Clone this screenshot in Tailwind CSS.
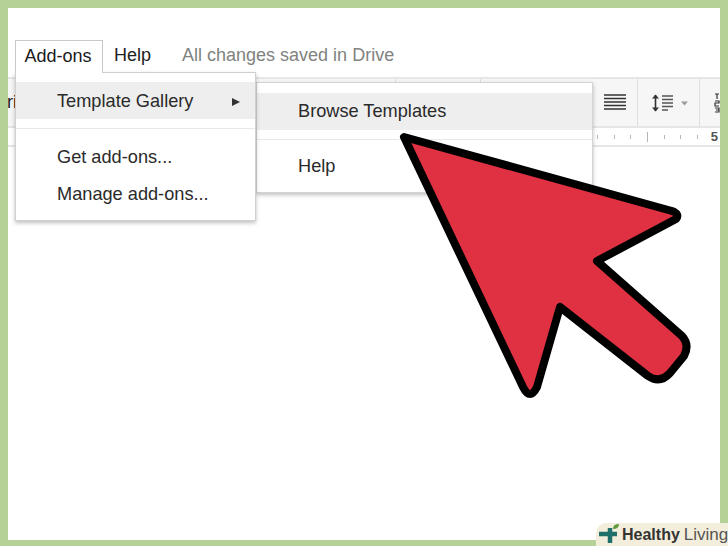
<!DOCTYPE html>
<html lang="en">
<head>
  <meta charset="UTF-8" />
  <title>Add-ons menu</title>
  <script src="https://cdn.jsdelivr.net/npm/@tailwindcss/browser@4"></script>
</head>
<body class="relative w-[728px] h-[546px] overflow-hidden bg-[#b6d197] p-2 font-['Liberation_Sans',Arial,sans-serif]">

  <div class="relative w-[712px] h-[532px] bg-white">
    <!-- menu bar -->
    <div class="flex items-start h-[69px] pt-[32px] text-[18px] text-[#333]">
      <div class="ml-[7px] w-[88px] h-[33px] pb-[2px] pr-[2px] flex items-center justify-center bg-white border border-b-0 border-[#c9c9c9] text-[#1a1a1a] relative z-10">Add-ons</div>
      <div class="ml-[11px] h-[33px] pb-[2px] flex items-center text-[#222]">Help</div>
      <div class="ml-[31px] h-[33px] pb-[2px] flex items-center text-[#80837f]">All changes saved in Drive</div>
    </div>

    <!-- toolbar -->
    <div class="flex h-[51px] bg-[#f6f6f6] border-y-2 border-[#e6e6e6] text-[#222]">
      <div class="w-[390px] border-r border-[#dedede] flex items-center text-[18px] overflow-hidden"><span class="-ml-px">ri</span></div>
      <div class="w-[85px] border-r border-[#dedede]"></div>
      <div class="w-[158px] border-r border-[#dedede] flex items-center justify-end pr-[11px]">
        <svg width="22" height="17" viewBox="0 0 22 17"><path d="M0 1h22M0 4.500h22M0 8h22M0 11.500h22M0 15h22" stroke="#333" stroke-width="1.500"/></svg>
      </div>
      <div class="w-[62px] border-r border-[#dedede] flex items-center pl-[12px]">
        <svg width="40" height="20" viewBox="0 0 40 20">
          <path d="M5.500 2v16" stroke="#333" stroke-width="1.600"/>
          <path d="M2 5.500L5.500 1.500L9 5.500zM2 14.500L5.500 18.500L9 14.500z" fill="#333"/>
          <path d="M12 3h11M12 6.500h11M12 10h11M12 13.500h11M12 17h6" stroke="#555" stroke-width="1.300"/>
          <path d="M31 8.500h7l-3.500 4z" fill="#9a9a9a"/>
        </svg>
      </div>
      <div class="flex-1 pl-[14px] flex flex-col justify-center text-[#333]">
        <svg width="6" height="20" viewBox="0 0 6 20"><path d="M1 1h4M3 1v5M1 8h4v2H1v3h4M1 15h4v4H1M2 17h3" fill="none" stroke="#333" stroke-width="1.200"/></svg>
      </div>
    </div>

    <!-- ruler -->
    <div class="relative h-[19px] bg-white border-b-2 border-[#e6e6e6]">
      <div class="flex items-center justify-end h-full gap-[15.700px] pr-[2px] text-[13px] text-[#555]">
        <span class="w-px h-[4px] bg-[#b5b5b5]"></span>
        <span class="w-px h-[4px] bg-[#b5b5b5]"></span>
        <span class="w-px h-[4px] bg-[#b5b5b5]"></span>
        <span class="w-px h-[10px] bg-[#b5b5b5]"></span>
        <span class="w-px h-[4px] bg-[#b5b5b5]"></span>
        <span class="w-px h-[4px] bg-[#b5b5b5]"></span>
        <span class="w-px h-[4px] bg-[#b5b5b5]"></span>
        <span class="-ml-[3px] font-bold">5</span>
      </div>
    </div>

    <!-- sub menu -->
    <div class="absolute left-[248px] top-[74px] w-[337px] h-[111px] bg-white border border-[#d4d4d4] shadow-[0_2px_4px_rgba(0,0,0,0.25)] pt-[10px] text-[18.200px] text-[#2a2a2a]">
      <div class="h-[37px] pl-[41px] flex items-center bg-[#eeeeee]">Browse Templates</div>
      <div class="mt-[9px] h-px bg-[#e8e8e8]"></div>
      <div class="mt-[8px] h-[37px] pl-[41px] flex items-center">Help</div>
    </div>

    <!-- add-ons menu -->
    <div class="absolute left-[7px] top-[64px] w-[241px] h-[149px] bg-white border border-[#d0d0d0] shadow-[0_2px_4px_rgba(0,0,0,0.25)] pt-[9px] text-[18.200px] text-[#2a2a2a]">
      <div class="relative h-[37px] pl-[41px] pr-[15px] pt-[2px] flex items-center justify-between bg-[#eeeeee]">
        <span>Template Gallery</span>
        <span class="w-0 h-0 border-y-[4.500px] border-y-transparent border-l-[8px] border-l-[#333]"></span>
      </div>
      <div class="mt-[9px] h-px bg-[#e8e8e8]"></div>
      <div class="mt-[9px] h-[37px] pl-[41px] pt-[2px] flex items-center">Get add-ons...</div>
      <div class="h-[37px] pl-[41px] pt-[2px] flex items-center">Manage add-ons...</div>
    </div>
  </div>

  <!-- big red arrow -->
  <svg class="absolute left-0 top-0" width="728" height="546" viewBox="0 0 728 546">
    <path d="M404 137 L672 211 Q680 214 676 219 L597 261 L682 336 Q690 345 684 356 L670 373 Q660 384 648 376 L560 307 L537 387 Q530 401 523 387 Z" fill="#e03143" stroke="#000" stroke-width="8" stroke-linejoin="round"/>
  </svg>

  <!-- watermark -->
  <div class="absolute right-0 bottom-0 w-[132px] h-[23px] bg-[#f3eedb] rounded-tl-[10px] flex items-center leading-none text-[#333]">
    <svg class="ml-[3px] -mt-[3px] shrink-0" width="22" height="19" viewBox="0 0 22 19">
      <path d="M0 10h18M11 4v15" stroke="#1f6f6b" stroke-width="4.500"/>
      <path d="M14 5Q14 0 20 0Q20 5 14 5z" fill="#5c9a3a"/>
    </svg>
    <span class="ml-[1px] text-[16px] font-bold">Healthy</span>
    <span class="ml-[4px] text-[17px] text-[#555]">Living</span>
  </div>

</body>
</html>
